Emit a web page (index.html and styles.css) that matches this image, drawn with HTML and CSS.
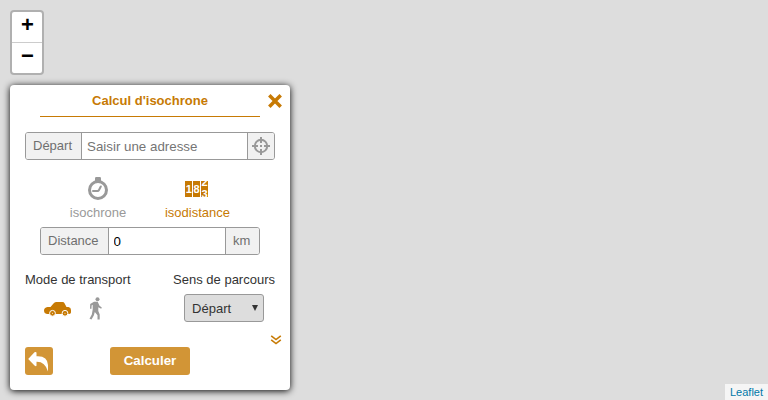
FILE: index.html
```html
<!DOCTYPE html>
<html lang="fr">
<head>
<meta charset="utf-8">
<title>Calcul d'isochrone</title>
<link rel="stylesheet" href="styles.css">
</head>
<body>
<main class="map">
  <div class="zoom-control">
    <a class="zoom-in">+</a>
    <a class="zoom-out">−</a>
  </div>

  <section class="panel">
    <header class="panel-header">
      <h1 class="panel-title">Calcul d'isochrone</h1>
      <svg class="close" viewBox="0 0 14 14"><path d="M1.300 1.300 12.700 12.700M12.700 1.300 1.300 12.700"/></svg>
    </header>

    <div class="field">
      <label class="addon origin-label">Départ</label>
      <input class="input" type="text" placeholder="Saisir une adresse">
      <span class="addon locate">
        <svg class="target" viewBox="0 0 18 18"><circle cx="9" cy="9" r="6.200" /><path d="M9 0v6M9 12v6M0 9h6M12 9h6"/><path class="dot" d="M8 9h2"/></svg>
      </span>
    </div>

    <div class="modes">
      <div class="mode">
        <svg class="mode-icon" viewBox="0 0 24 24"><rect x="9" y="1" width="6" height="5" rx="1.200" fill="#999"/><circle cx="12" cy="14" r="8.500" fill="none" stroke="#999" stroke-width="3"/><path d="M7 15h4.500q1 0 1.500-1l1.800-3.500" fill="none" stroke="#999" stroke-width="2" stroke-linecap="round"/></svg>
        <span>isochrone</span>
      </div>
      <div class="mode active">
        <svg class="mode-icon" viewBox="0 0 24 24">
          <clipPath id="wheel"><rect x="16" y="5" width="7" height="16"/></clipPath>
          <path d="M0 5h7v16H0zM8 5h7v16H8zM16 5h7v16h-7z" fill="#c77a04"/>
          <g class="digits"><text x="3.800" y="17">1</text><text x="11.500" y="17">8</text><g clip-path="url(#wheel)"><text x="19.500" y="9.500">2</text><text x="19.500" y="21.500">3</text></g></g>
        </svg>
        <span>isodistance</span>
      </div>
    </div>

    <div class="field distance">
      <label class="addon distance-label">Distance</label>
      <input class="input" type="text" value="0">
      <span class="addon unit">km</span>
    </div>

    <div class="options">
      <div class="option">
        <span>Mode de transport</span>
        <div class="transports">
          <svg class="car" viewBox="0 0 28 16"><path d="M0 9.500Q0 6.500 3.500 6H6.500L9.500 2.500Q10.500 1 12 1h6.500Q20 1 20.500 2.200L22.500 6H24.500Q27 6.500 27 9v2.500Q26.500 13 25 13H3Q0 12.500 0 9.500z" fill="#c77a04"/><g fill="#c77a04" stroke="#fff" stroke-width="1"><circle cx="8.500" cy="12.300" r="2.900"/><circle cx="21" cy="12.300" r="2.900"/></g><circle cx="8.500" cy="12.300" r=".5" fill="#fff"/><circle cx="21" cy="12.300" r=".5" fill="#fff"/></svg>
          <svg class="walker" viewBox="0 0 14 23"><circle cx="8.500" cy="2.200" r="2" fill="#999"/><path d="M5 4.800h3.700l1.800 4 2.300 1.600-.6 1.400-2.900-1.500v3.700l1.400 3.500v5H8.500v-4.300L5.800 15l-1 3.500L2.500 22.500.5 21.800 2.800 17.500 3.700 12.500V7.800L2.600 8.500l-.1 3.300H1l.2-4.800z" fill="#999"/></svg>
        </div>
      </div>
      <div class="option direction">
        <span>Sens de parcours</span>
        <div class="select"><span>Départ</span><svg class="caret" viewBox="0 0 6 6"><path d="M0 0h6L3 6z" fill="#333"/></svg></div>
      </div>
    </div>

    <div class="more"><svg class="chevrons" viewBox="0 0 12 10"><path d="M1.200 .8 6 4.600 10.800 .8M1.200 4.800 6 8.600 10.800 4.800"/></svg></div>

    <footer class="actions">
      <button class="back"><svg viewBox="0 0 28 28"><path d="M3.200 12 9.500 5.300Q11.500 4.200 11.500 6v3.200Q22.500 8.500 23 18v6.500Q20 14.500 11.500 14.800v3.400Q11.500 20 9.500 18.500z" fill="#fff"/></svg></button>
      <button class="submit">Calculer</button>
    </footer>
  </section>

  <div class="attribution">Leaflet</div>
</main>
</body>
</html>
```
FILE: styles.css
```css
* { box-sizing: border-box; }
body { margin: 0; }
.map {
  position: relative;
  height: 400px;
  overflow: hidden;
  background: #ddd;
  font: 13px/15px "Liberation Sans", Arial, sans-serif;
  color: #333;
}
.zoom-control {
  position: absolute;
  top: 10px;
  left: 10px;
  width: 34px;
  height: 65px;
  border: 2px solid rgba(0, 0, 0, .2);
  border-radius: 4px;
  background: #fff;
  background-clip: padding-box;
  color: #000;
  font: bold 22px/26px "Liberation Sans", Arial, sans-serif;
  text-align: center;
}
.zoom-in, .zoom-out { display: block; height: 30px; padding-left: 1px; }
.zoom-in { height: 31px; border-bottom: 1px solid #ccc; }
.panel {
  position: absolute;
  top: 85px;
  left: 10px;
  width: 280px;
  height: 305px;
  padding: 0 15px;
  border-radius: 4px;
  background: #fff;
  box-shadow: 0 1px 7px #000;
}
.panel-header { position: relative; height: 32px; margin: 0 15px 15px; border-bottom: 1px solid #c77a04; }
.panel-title { margin: 0; padding-top: 8px; font-size: 13px; line-height: 15px; text-align: center; color: #c77a04; }
.close { position: absolute; top: 9px; right: -22px; width: 14px; height: 14px; fill: none; stroke: #c77a04; stroke-width: 3.5; }
.field { display: flex; height: 28px; border: 1px solid #999; border-radius: 3px; overflow: hidden; background: #fff; }
.addon { flex: none; background: #f1f1f1; color: #6f6f6f; line-height: 26px; padding-left: 7px; }
.origin-label { width: 56px; border-right: 1px solid #999; }
.input { flex: 1; min-width: 0; padding: 0 5px; border: 0; outline: 0; background: #fff; color: #000; font: 13.33px "Liberation Sans", Arial, sans-serif; }
.input::placeholder { color: #757575; }
.locate { display: flex; width: 27px; padding: 4px; border-left: 1px solid #999; }
.target { width: 18px; height: 18px; fill: none; stroke: #999; stroke-width: 2; }
.modes { display: flex; padding: 16px 0 0 23px; }
.mode { display: flex; flex-direction: column; align-items: center; width: 100px; height: 51px; color: #999; }
.mode-icon { width: 24px; height: 24px; margin-bottom: 5px; }
.mode.active { width: 99px; color: #c77a04; }
.active .mode-icon { margin-right: 1px; }
.digits { fill: #fff; font: bold 11px "Liberation Sans", Arial, sans-serif; text-anchor: middle; }
.distance { margin: 0 15px; }
.distance .input { padding-left: 4.5px; }
.distance-label { width: 68px; border-right: 1px solid #999; }
.unit { width: 34px; border-left: 1px solid #999; }
.options { display: flex; justify-content: space-between; margin-top: 17px; }
.transports { display: flex; gap: 16px; padding: 10px 0 0 19px; }
.car { width: 28px; height: 16px; margin-top: 4px; }
.walker { width: 14px; height: 23px; margin-left: 1px; }
.direction { display: flex; flex-direction: column; align-items: center; }
.select { display: flex; justify-content: space-between; width: 80px; height: 28px; margin-top: 7px; padding: 0 5px 0 7px; border: 1px solid #999; border-radius: 3px; background: #ddd; line-height: 27px; }
.caret { width: 6px; height: 6px; margin-top: 10px; }
.more { display: flex; justify-content: flex-end; height: 25px; padding: 13px 0 0; margin-right: -7px; }
.chevrons { width: 12px; height: 10px; fill: none; stroke: #c77a04; stroke-width: 1.6; }
.actions { display: flex; gap: 57px; }
.actions button { height: 28px; padding: 0 0 2px; border: 0; border-radius: 3px; background: #d29536; color: #fff; font: bold 13.33px "Liberation Sans", Arial, sans-serif; }
.actions .back { width: 28px; padding: 0; }
.back svg { display: block; width: 28px; height: 28px; }
.submit { width: 80px; }
.attribution { position: absolute; right: 0; bottom: 0; padding: 0 5px; background: rgba(255, 255, 255, .7); color: #0078a8; font-size: 11px; line-height: 16px; }
```
